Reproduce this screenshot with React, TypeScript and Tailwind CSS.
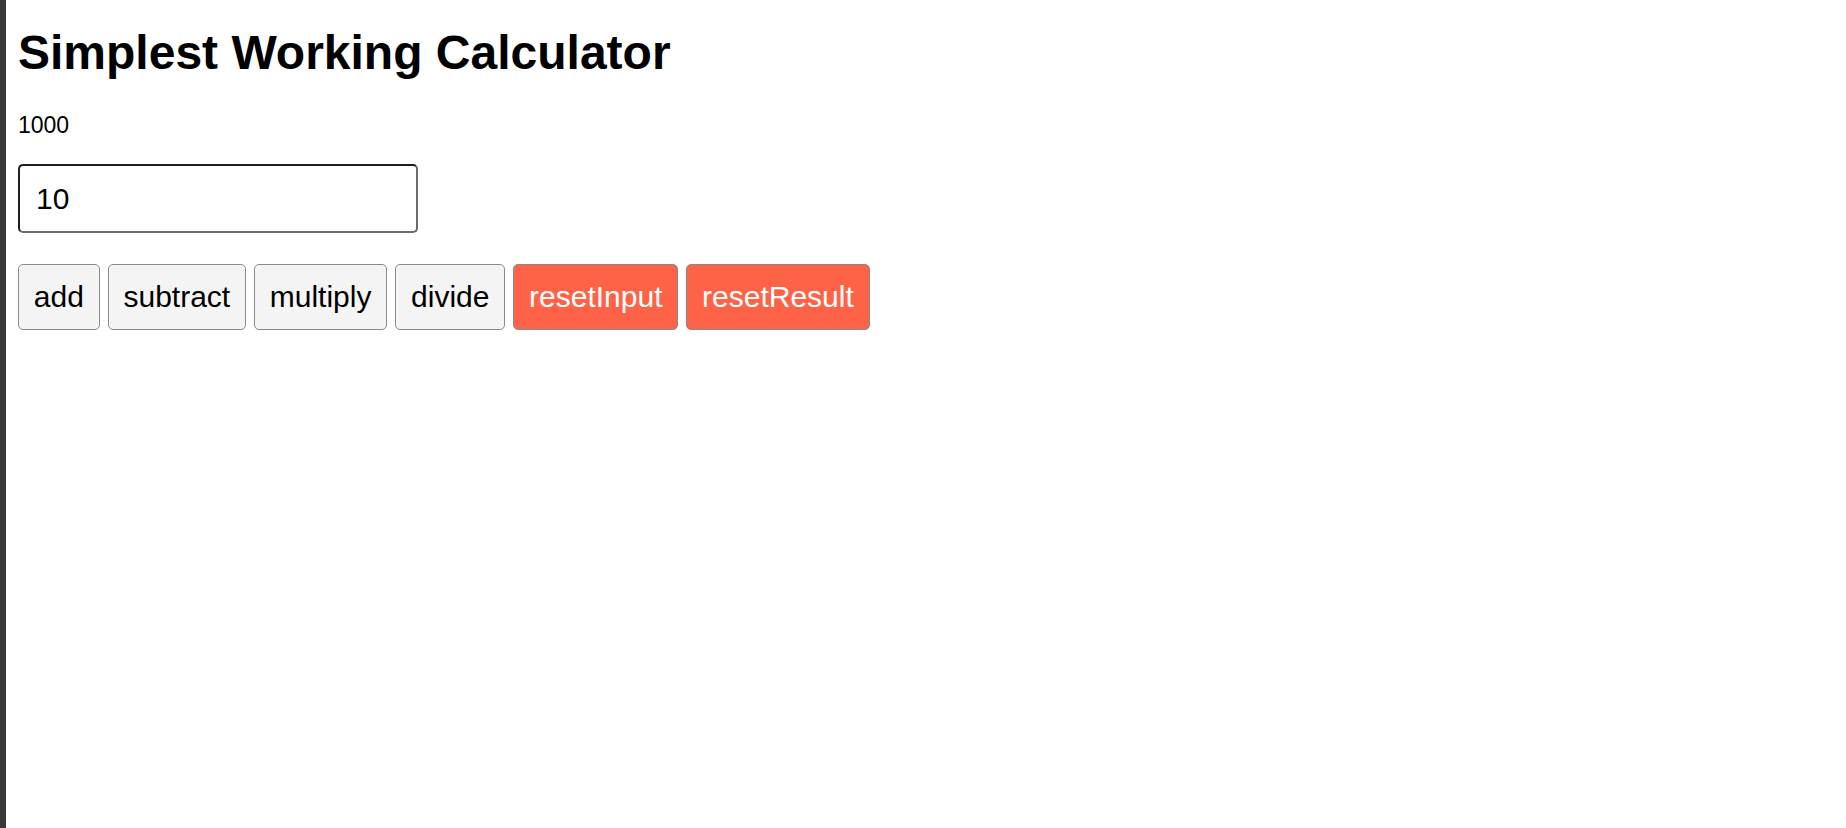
import React, { useState } from "react";

export default function App() {
  const [result, setResult] = useState(1000);
  const [value, setValue] = useState("10");
  const num = () => Number(value) || 0;
  const plain =
    "rounded-[5px] border border-[#8a8a8a] bg-[#f4f4f4] px-[14.8px] py-[15px] text-[30px] leading-[34px] text-black";
  const red =
    "rounded-[5px] border border-[#8a8a8a] bg-[#ff6347] px-[14.8px] py-[15px] text-[30px] leading-[34px] text-white";
  return (
    <div
      className="flex min-h-screen bg-white text-black"
      style={{ fontFamily: '"Liberation Sans", Arial, sans-serif' }}
    >
      <div className="w-[6px] shrink-0 bg-[#393939]" />
      <div className="flex flex-col items-start pl-[12px]">
        <h1 className="mt-[25px] text-[48px] font-bold leading-[55px]">
          Simplest Working Calculator
        </h1>
        <p className="mt-[33px] text-[23px] leading-[25px]">{result}</p>
        <input
          value={value}
          onChange={(e) => setValue(e.target.value)}
          className="mt-[26px] h-[69px] w-[400px] rounded-[5px] border-2 border-t-[#1e1e1e] border-l-[#1e1e1e] border-r-[#6b6b6b] border-b-[#6b6b6b] px-[16px] text-[30px] outline-none"
        />
        <div className="mt-[31px] flex gap-[8px]">
          <button className={plain} onClick={() => setResult(result + num())}>
            add
          </button>
          <button className={plain} onClick={() => setResult(result - num())}>
            subtract
          </button>
          <button className={plain} onClick={() => setResult(result * num())}>
            multiply
          </button>
          <button className={plain} onClick={() => setResult(result / num())}>
            divide
          </button>
          <button className={red} onClick={() => setValue("")}>
            resetInput
          </button>
          <button className={red} onClick={() => setResult(0)}>
            resetResult
          </button>
        </div>
      </div>
    </div>
  );
}
